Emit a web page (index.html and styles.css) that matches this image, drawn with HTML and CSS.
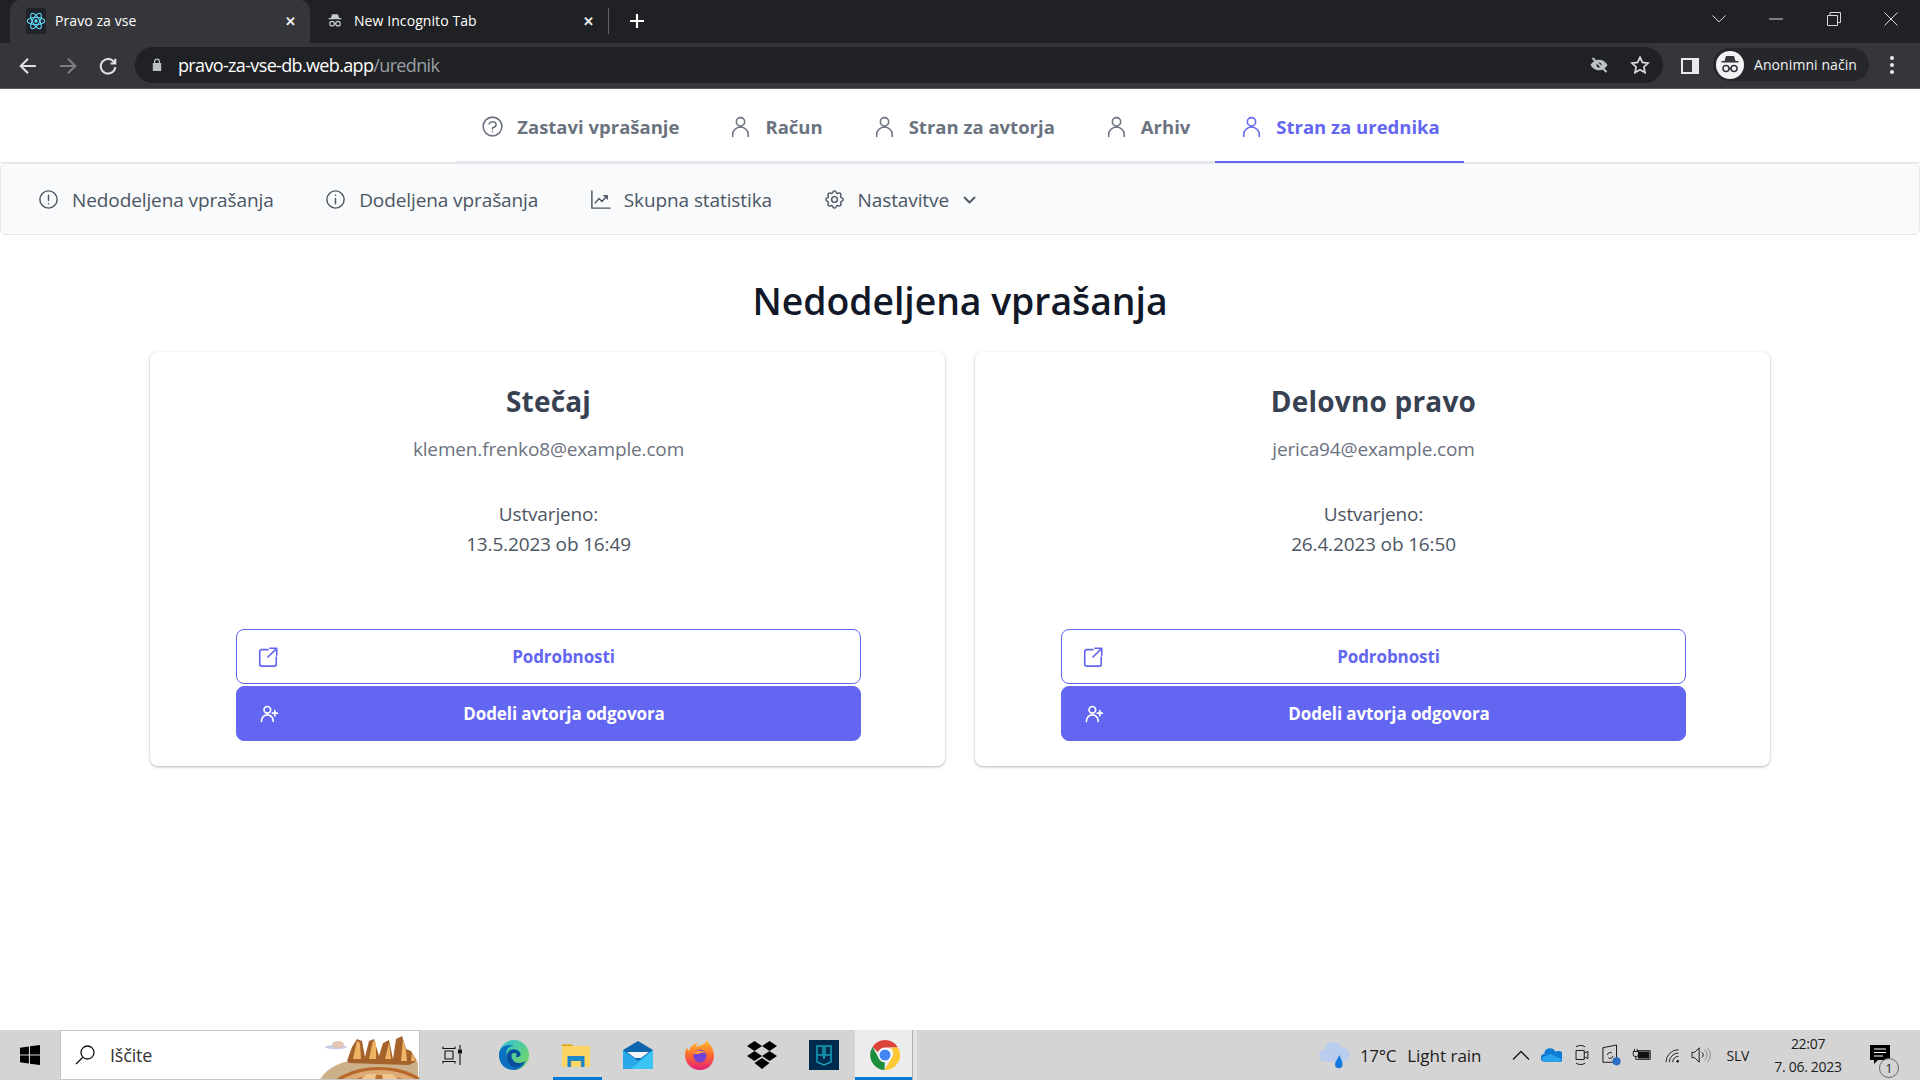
FILE: index.html
```html
<!DOCTYPE html>
<html lang="sl">
<head>
<meta charset="utf-8">
<title>Pravo za vse</title>
<link rel="stylesheet" href="styles.css">
</head>
<body>
<svg class="defs" width="0" height="0" aria-hidden="true">
  <symbol id="i-user" viewBox="0 0 24 24"><path d="M16 7.500a4 4 0 11-8 0 4 4 0 018 0zM4.500 21.500v-1.500a7.500 7.500 0 0115 0v1.500"/></symbol>
  <symbol id="i-question" viewBox="0 0 24 24"><path d="M8.700 9.500c.5-1.200 1.800-2 3.300-2 1.900 0 3.400 1.200 3.400 2.700 0 1.300-1.100 2.300-2.500 2.600-.5.100-.9.500-.9 1v.7m0 2.600h.01M21 12a9 9 0 11-18 0 9 9 0 0118 0z"/></symbol>
  <symbol id="i-excl" viewBox="0 0 24 24"><path d="M12 7.500v5.500m0 3.500h.01M21 12a9 9 0 11-18 0 9 9 0 0118 0z"/></symbol>
  <symbol id="i-info" viewBox="0 0 24 24"><path d="M12 11v5.500m0-9h.01M21 12a9 9 0 11-18 0 9 9 0 0118 0z"/></symbol>
  <symbol id="i-chart" viewBox="0 0 24 24"><path d="M3 3v18h19M6.500 15.500l4-4.500 3 3 5.500-6m-3.500 0h3.500v3.500"/></symbol>
  <symbol id="i-cog" viewBox="0 0 24 24"><path d="M10.325 4.317c.426-1.756 2.924-1.756 3.350 0a1.724 1.724 0 002.573 1.066c1.543-.94 3.310.826 2.370 2.370a1.724 1.724 0 001.065 2.572c1.756.426 1.756 2.924 0 3.350a1.724 1.724 0 00-1.066 2.573c.94 1.543-.826 3.310-2.370 2.370a1.724 1.724 0 00-2.572 1.065c-.426 1.756-2.924 1.756-3.350 0a1.724 1.724 0 00-2.573-1.066c-1.543.94-3.310-.826-2.370-2.370a1.724 1.724 0 00-1.065-2.572c-1.756-.426-1.756-2.924 0-3.350a1.724 1.724 0 001.066-2.573c-.94-1.543.826-3.310 2.370-2.370.996.608 2.296.07 2.572-1.065z"/><path d="M15 12a3 3 0 11-6 0 3 3 0 016 0z"/></symbol>
  <symbol id="i-ext" viewBox="0 0 24 24"><path d="M12 4H5a2 2 0 00-2 2v14a2 2 0 002 2h14a2 2 0 002-2v-8M14 2.500h7.500V10M21.500 2.500L12 12"/></symbol>
  <symbol id="i-uplus" viewBox="0 0 24 24"><path d="M14 7a4 4 0 11-8 0 4 4 0 018 0zM3 21v-1a7 7 0 0114 0v1M19 8v6m-3-3h6"/></symbol>
  <symbol id="i-spy" viewBox="0 0 24 24"><path class="solid" d="M8 3h8l1.500 5h3v1.500h-17V8h3z"/><circle class="ring" cx="8" cy="15.500" r="3"/><circle class="ring" cx="16" cy="15.500" r="3"/><path class="ring" d="M11 15.500h2"/></symbol>
</svg>

<header class="chrome">
  <div class="tabstrip">
    <div class="tab tab-active">
      <span class="fav-box">
        <svg class="fav" viewBox="0 0 24 24"><g fill="none" stroke="#61dafb" stroke-width="1.300"><ellipse cx="12" cy="12" rx="10.500" ry="4.200"/><ellipse cx="12" cy="12" rx="10.500" ry="4.200" transform="rotate(60 12 12)"/><ellipse cx="12" cy="12" rx="10.500" ry="4.200" transform="rotate(120 12 12)"/></g><circle cx="12" cy="12" r="2" fill="#61dafb"/></svg>
      </span>
      <span class="tab-title">Pravo za vse</span>
      <span class="tab-close">✕</span>
    </div>
    <div class="tab tab-idle">
      <svg class="spy-small"><use href="#i-spy"/></svg>
      <span class="tab-title">New Incognito Tab</span>
      <span class="tab-close">✕</span>
    </div>
    <span class="tab-sep"></span>
    <svg class="plus" viewBox="0 0 16 16"><path d="M8 1v14M1 8h14"/></svg>
    <div class="winctl">
      <svg class="wc wc-chev" viewBox="0 0 14 8"><path d="M.5.500L7 6.800 13.500.500"/></svg>
      <svg class="wc wc-min" viewBox="0 0 14 14"><path d="M0 7h14"/></svg>
      <svg class="wc wc-res" viewBox="0 0 14 14"><path d="M.5 3.500h10v10H.5zM3 3.500V.5h10.500v10h-3"/></svg>
      <svg class="wc wc-close" viewBox="0 0 14 14"><path d="M.5.500l13 13m0-13l-13 13"/></svg>
    </div>
  </div>
  <div class="toolbar">
    <svg class="tb-nav" viewBox="0 0 16 16"><path d="M15 8H2m6-6.500L1.500 8 8 14.500"/></svg>
    <svg class="tb-nav dim" viewBox="0 0 16 16"><path d="M1 8h13M8 1.500L14.500 8 8 14.500"/></svg>
    <svg class="tb-nav" viewBox="0 0 16 16"><path d="M13.800 5.200A6.500 6.500 0 1014.500 9M14.500 1.500v4.200h-4.200"/></svg>
    <div class="omnibox">
      <svg class="lock" viewBox="0 0 10 13"><path d="M2 5V3.500a3 3 0 016 0V5h1.200v8H.8V5zm1.200 0h3.600V3.500a1.800 1.800 0 00-3.600 0z"/></svg>
      <span class="url">pravo-za-vse-db.web.app<span class="url-path">/urednik</span></span>
      <svg class="omni-eye" viewBox="0 0 20 20"><path class="eye-fill" d="M1.500 10C3.500 6.500 6.500 4.800 10 4.800s6.500 1.700 8.500 5.200c-2 3.500-5 5.200-8.500 5.200S3.500 13.500 1.500 10z"/><circle class="eye-hole" cx="10" cy="10" r="2.500"/><path class="eye-slash" d="M3.500 3l14 14"/></svg>
      <svg class="omni-star" viewBox="0 0 20 20"><path d="M10 2.200l2.400 5.200 5.600.7-4.100 3.900 1.100 5.600-5-2.800-5 2.800 1.100-5.600L2 8.100l5.600-.7z"/></svg>
    </div>
    <svg class="sidepanel" viewBox="0 0 18 16"><path d="M0 0h18v16H0zM2 2v12h9V2z" fill-rule="evenodd"/></svg>
    <div class="profile">
      <span class="avatar"><svg class="spy-avatar"><use href="#i-spy"/></svg></span>
      <span class="profile-name">Anonimni način</span>
    </div>
    <span class="kebab"><i></i><i></i><i></i></span>
  </div>
</header>

<main class="page">
  <nav class="topnav">
    <a class="topnav-item"><svg class="ic ic-nav"><use href="#i-question"/></svg>Zastavi vprašanje</a>
    <a class="topnav-item"><svg class="ic ic-nav"><use href="#i-user"/></svg>Račun</a>
    <a class="topnav-item"><svg class="ic ic-nav"><use href="#i-user"/></svg>Stran za avtorja</a>
    <a class="topnav-item"><svg class="ic ic-nav"><use href="#i-user"/></svg>Arhiv</a>
    <a class="topnav-item is-current"><svg class="ic ic-nav"><use href="#i-user"/></svg>Stran za urednika</a>
  </nav>
  <nav class="subnav">
    <a class="subnav-item"><svg class="ic ic-sub"><use href="#i-excl"/></svg>Nedodeljena vprašanja</a>
    <a class="subnav-item"><svg class="ic ic-sub"><use href="#i-info"/></svg>Dodeljena vprašanja</a>
    <a class="subnav-item"><svg class="ic ic-sub"><use href="#i-chart"/></svg>Skupna statistika</a>
    <a class="subnav-item"><svg class="ic ic-sub"><use href="#i-cog"/></svg>Nastavitve<svg class="ic ic-chev" viewBox="0 0 12 8"><path d="M1 1.500l5 5 5-5"/></svg></a>
  </nav>
  <h1 class="title">Nedodeljena vprašanja</h1>
  <section class="cards">
    <article class="card">
      <h2 class="card-title">Stečaj</h2>
      <p class="card-email">klemen.frenko8@example.com</p>
      <p class="card-date">Ustvarjeno:<br>13.5.2023 ob 16:49</p>
      <div class="card-actions">
        <button class="btn btn-outline"><svg class="ic ic-btn"><use href="#i-ext"/></svg><span class="btn-label">Podrobnosti</span></button>
        <button class="btn btn-solid"><svg class="ic ic-btn"><use href="#i-uplus"/></svg><span class="btn-label">Dodeli avtorja odgovora</span></button>
      </div>
    </article>
    <article class="card">
      <h2 class="card-title">Delovno pravo</h2>
      <p class="card-email">jerica94@example.com</p>
      <p class="card-date">Ustvarjeno:<br>26.4.2023 ob 16:50</p>
      <div class="card-actions">
        <button class="btn btn-outline"><svg class="ic ic-btn"><use href="#i-ext"/></svg><span class="btn-label">Podrobnosti</span></button>
        <button class="btn btn-solid"><svg class="ic ic-btn"><use href="#i-uplus"/></svg><span class="btn-label">Dodeli avtorja odgovora</span></button>
      </div>
    </article>
  </section>
</main>

<footer class="taskbar">
  <div class="start"><svg class="win" viewBox="0 0 20 20"><path d="M0 2.800l8.900-1.300v8H0zM10 1.300L20 0v9.500H10zM0 10.500h8.900v8L0 17.200zM10 10.500h10V20l-10-1.300z"/></svg></div>
  <div class="search">
    <svg class="search-ic" viewBox="0 0 20 20"><circle cx="12.500" cy="7.500" r="6.500"/><path d="M7.800 12.200L1 19"/></svg>
    <span class="search-text">Iščite</span>
    <svg class="search-art" viewBox="0 0 100 50">
      <ellipse cx="17" cy="16" rx="11" ry="2" fill="#c3cfe4"/><ellipse cx="19" cy="13.500" rx="6" ry="3.500" fill="#e3c6b2"/>
      <path d="M0 50C8 36 22 30 40 29L99 31V50z" fill="#cbb08a"/>
      <path d="M28 30L33 16 38 8l5 2 3 16 4-16 5-2 5 17 4-13 6-3 4 19 3-20 6-3 4 13 5 2 6 10-8 4-60-2z" fill="#a5632b"/>
      <path d="M34 28l4-18 3 2 1 16zM50 28l4-18 3 2v16zM66 28l4-16 2 16zM82 30l2-22 3 12 1 10zM92 30l1-8 4 8z" fill="#eeb565"/>
      <ellipse cx="60" cy="63" rx="51" ry="27" fill="#b9682c"/>
      <ellipse cx="60" cy="64" rx="47" ry="25" fill="#dcaa72"/>
      <ellipse cx="60" cy="66" rx="40" ry="22" fill="#b9702f"/>
      <path d="M40 50l8-7h9l-1 7zM64 50l-1-7h10l9 7z" fill="#f2c48e"/>
    </svg>
  </div>
  <div class="tb-app tb-view"><svg class="taskview" viewBox="0 0 20 20"><path d="M1 1.500v2h12v-2M3 6h8v8H3zM1 18.500v-2h12v2M18 0v4M18 9v11"/><rect class="tv-dot" x="16.500" y="5" width="3" height="3"/></svg></div>
  <div class="tb-app"><svg class="app" viewBox="0 0 30 30"><defs><linearGradient id="ed1" x1="0" y1="0" x2="1" y2="1"><stop offset="0" stop-color="#2bc3d8"/><stop offset="1" stop-color="#7ed957"/></linearGradient></defs><circle cx="15" cy="15" r="15" fill="url(#ed1)"/><path d="M0 15C0 6 9 3 15 6c-6 0-9 4-7 10 2 8 12 12 19 5-3 6-8 9-12 9C6 30 0 24 0 15z" fill="#0c6fc0"/><path d="M8 16c0-5 5-8 10-6 4 2 5 6 1 7-5 1 2-4-4-4-4 0-3 6 1 9 3 2 7 1 10-1-3 5-8 7-12 6-4-2-6-6-6-11z" fill="#0a4f9e"/></svg></div>
  <div class="tb-app is-open"><svg class="app" viewBox="0 0 30 24"><path d="M1 1.500h10l2 3h-12z" fill="#e0a400"/><path d="M1 3h28v21H1z" fill="#fbd566"/><path d="M6.500 24V13h17v11h-3.500v-6h-10v6z" fill="#1f86c9"/></svg></div>
  <div class="tb-app"><svg class="app" viewBox="0 0 30 28"><path d="M0 9L15 0l15 9v19H0z" fill="#0f65ad"/><path d="M4 11h22l-8 6h-6z" fill="#f3f5f7"/><path d="M0 9l15 11L30 9v19H0z" fill="#29a8ea"/><path d="M30 9v19H8z" fill="#3cc4f4"/></svg></div>
  <div class="tb-app"><svg class="app" viewBox="0 0 30 30"><defs><linearGradient id="ff1" x1="0" y1="0" x2="0" y2="1"><stop offset="0" stop-color="#ffc22e"/><stop offset=".5" stop-color="#ff6a2c"/><stop offset="1" stop-color="#e5207a"/></linearGradient></defs><path d="M22 0c1 3 5 6 6 10 3 8-1 20-13 20C6 30 0 23 0 15c0-3 1-6 2-8 0 2 1 3 2 4 1-4 5-8 9-8-2 2-2 3-1 4 3-2 8-2 10-7z" fill="url(#ff1)"/><circle cx="15" cy="16" r="6.500" fill="#7542d6"/><path d="M8 13c3-3 10-4 13 1-3-2-6-1-7 0-2 0-4 0-6-1z" fill="#ff9a30"/></svg></div>
  <div class="tb-app"><svg class="app" viewBox="0 0 30 28"><path d="M7.500 0L15 5l-7.500 5L0 5zM22.500 0L30 5l-7.500 5L15 5zM7.500 10L15 15l-7.500 5L0 15zM22.500 10L30 15l-7.500 5L15 15zM15 17l7.500 5L15 28l-7.500-6z" fill="#000"/></svg></div>
  <div class="tb-app"><svg class="app app-tile" viewBox="0 0 30 30"><rect width="30" height="30" fill="#002a4e"/><path d="M8 6h6v9H8zM16 6h6v9h-6zM8 15v7l7 3 7-3v-7M14 15l1 3 1-3" fill="none" stroke="#18a0b8" stroke-width="1.500"/></svg></div>
  <div class="tb-app is-active"><svg class="app" viewBox="0 0 30 30"><path d="M15 0a15 15 0 0113 7.500H15a7.500 7.500 0 00-7 4.700L2.500 7A15 15 0 0115 0z" fill="#db4437"/><path d="M28 7.500A15 15 0 0114.500 30l6.500-11a7.500 7.500 0 00-.6-11.500z" fill="#fcc934"/><path d="M2.500 7l6.600 11.500A7.500 7.500 0 0014.800 22.500L14.500 30A15 15 0 012.500 7z" fill="#1e8e3e"/><circle cx="15" cy="15" r="7" fill="#fff"/><circle cx="15" cy="15" r="5.500" fill="#4285f4"/></svg></div>
  <span class="tb-sliver"></span>
  <div class="tray">
    <svg class="t-weather" viewBox="0 0 30 30"><path d="M6 21a5.500 5.500 0 01.5-11A8 8 0 0122 8a6.500 6.500 0 012 13z" fill="#b9cdee"/><path d="M20 15c1.500 4 3 6 3 9a3.500 3.500 0 01-7 0c0-3 2.500-5 4-9z" fill="#1479dc"/></svg>
    <span class="t-temp">17°C</span>
    <span class="t-cond">Light rain</span>
    <svg class="t-ic t-up" viewBox="0 0 18 10"><path d="M1 9.500l8-8 8 8"/></svg>
    <svg class="t-ic t-cloud" viewBox="0 0 22 14"><path d="M4 14a4 4 0 01-.5-8A6 6 0 0115 3.500a5 5 0 016 10.500z" fill="#0f7bd4"/><path d="M4 14a3 3 0 01-2-5l8-3 11 5a3 3 0 01-3 3z" fill="#2aa3ee"/></svg>
    <svg class="t-ic t-meet" viewBox="0 0 16 22"><path d="M2 2c3-2 7-2 10 0M2 20c3 2 7 2 10 0M2 6h9v10H2zM11 9l4-2v8l-4-2"/></svg>
    <svg class="t-ic t-sync" viewBox="0 0 22 24"><path d="M1 4l15-3v19H1zM6 12a3 3 0 015-2m1 3a3 3 0 01-5 2"/><circle class="t-dot" cx="16" cy="19" r="4.500"/></svg>
    <svg class="t-ic t-batt" viewBox="0 0 24 16"><path d="M4 1v3M7 1v3M2.500 4h6v3a3 3 0 01-6 0zM5.500 10v3H7M7 3h15v10H7"/><rect class="t-fill" x="8" y="4" width="13" height="8"/></svg>
    <svg class="t-ic t-wifi" viewBox="0 0 20 18"><path d="M1 17A15 15 0 0116 2M5 17A11 11 0 0116 6M9 17a7 7 0 017-7"/><circle class="t-fillc" cx="15" cy="16" r="1.500"/></svg>
    <svg class="t-ic t-vol" viewBox="0 0 22 20"><path d="M1 7h3l5-5v16l-5-5H1zM12 7a4 4 0 010 6"/><path class="t-faint" d="M15 4a8 8 0 010 12M18 2a11 11 0 010 16"/></svg>
    <span class="t-lang">SLV</span>
    <div class="t-clock"><span>22:07</span><span>7. 06. 2023</span></div>
    <div class="t-notif">
      <svg class="t-msg" viewBox="0 0 20 20"><path d="M0 0h20v15H8l-4 4v-4H0z"/><path class="t-msg-l" d="M4 4h12M4 7.500h12M4 11h9"/></svg>
      <span class="t-badge">1</span>
    </div>
  </div>
</footer>
</body>
</html>
```
FILE: styles.css
```css
* { box-sizing: border-box; }
html, body { margin: 0; height: 100%; }
body {
  width: 1920px;
  height: 1080px;
  overflow: hidden;
  display: flex;
  flex-direction: column;
  font-family: "Open Sans", "Noto Sans", sans-serif;
  background: #fff;
}
.defs { position: absolute; }
a { text-decoration: none; }

/* browser chrome */
.chrome { flex: none; background: #202124; color: #e8eaed; }
.tabstrip { height: 43px; display: flex; align-items: center; padding-left: 10px; }
.tab { height: 43px; display: flex; align-items: center; padding-bottom: 2px; font-size: 14px; letter-spacing: .08px; color: #e8eaed; }
.tab-active { width: 300px; background: #35363a; border-radius: 10px 10px 0 0; padding-left: 16px; padding-right: 14px; }
.tab-idle { width: 299px; padding-left: 16px; padding-right: 15px; }
.tab-title { flex: 1; white-space: nowrap; color: #fff; }
.tab-close { font-size: 13px; color: #eee; font-weight: 700; }
.fav-box { width: 20px; height: 26px; background: #20232a; border-radius: 2px; margin-right: 9px; display: flex; align-items: center; }
.fav { width: 20px; height: 20px; }
.spy-small { width: 18px; height: 18px; margin-right: 10px; fill: none; --spy: #c4c7cc; }
.tab-sep { width: 1px; height: 26px; background: #5f6368; margin-left: -1px; margin-bottom: 2px; }
.plus { width: 16px; height: 16px; margin-left: 20px; margin-bottom: 2px; fill: none; stroke: #fff; stroke-width: 2.200; }
.winctl { margin-left: auto; width: 186px; height: 100%; display: flex; align-items: center; justify-content: space-between; padding-bottom: 5px; margin-right: 22px; }
.wc { width: 14px; height: 14px; fill: none; stroke: #d8d8d8; stroke-width: 1; }
.wc-chev { height: 8px; }
.solid { fill: var(--spy); stroke: none; }
.ring { fill: none; stroke: var(--spy); stroke-width: 1.600; }
.toolbar { height: 46px; background: #35363a; display: flex; align-items: center; padding: 0 20px 0 19px; border-bottom: 1px solid #5a5b5e; }
.tb-nav { width: 18px; height: 18px; margin-right: 22px; fill: none; stroke: #dfe1e5; stroke-width: 1.800; flex: none; }
.tb-nav:nth-of-type(3) { margin-right: 18px; }
.tb-nav.dim { stroke: #7d7f83; }
.omnibox { width: 1528px; height: 36px; margin-top: -2px; background: #202124; border-radius: 18px; display: flex; align-items: center; padding: 0 10px 0 17px; flex: none; }
.lock { width: 10px; height: 13px; fill: #bdc1c6; margin-right: 16px; }
.url { flex: 1; font-size: 18px; letter-spacing: -.65px; color: #fff; }
.url-path { color: #9aa0a6; }
.omni-eye { width: 20px; height: 20px; margin-right: 21px; }
.eye-fill { fill: #bdc1c6; }
.eye-hole { fill: #202124; }
.eye-slash { stroke: #bdc1c6; stroke-width: 2; }
.omni-star { width: 20px; height: 20px; margin-right: 3px; fill: none; stroke: #dadce0; stroke-width: 1.700; }
.sidepanel { width: 18px; height: 16px; margin-left: 18px; fill: #e8eaed; flex: none; }
.profile { width: 156px; height: 33px; margin-left: 14px; background: #26272a; border-radius: 17px; display: flex; align-items: center; padding-left: 3px; flex: none; margin-top: -2px; }
.avatar { width: 28px; height: 28px; border-radius: 50%; background: #f1f3f4; margin-right: 10px; display: flex; align-items: center; justify-content: center; }
.spy-avatar { width: 24px; height: 24px; --spy: #35363a; }
.profile-name { font-size: 14px; letter-spacing: .08px; color: #f1f3f4; white-space: nowrap; }
.kebab { margin-left: 21px; display: flex; flex-direction: column; gap: 3px; margin-top: -2px; }
.kebab i { width: 4px; height: 4px; border-radius: 50%; background: #e8eaed; display: block; }

/* page */
.page { flex: 1; min-height: 0; color: #111827; }
.ic { fill: none; stroke: currentColor; stroke-width: 1.500; stroke-linecap: round; stroke-linejoin: round; flex: none; }
.topnav { height: 74px; display: flex; justify-content: center; background: linear-gradient(#e5e7eb, #e5e7eb) bottom left / 100% 1px no-repeat; }
.topnav-item { display: flex; align-items: center; gap: 12px; padding: 3px 24.500px 0; color: #6b7280; font-size: 18.500px; font-weight: 700; letter-spacing: 0; border-bottom: 2px solid #e5e7eb; white-space: nowrap; }
.topnav-item.is-current { color: #6366f1; border-bottom-color: #6366f1; }
.ic-nav { width: 25px; height: 25px; }
.subnav { height: 72px; background: #f9fafb; border: 1px solid #e5e7eb; border-radius: 6px; display: flex; align-items: center; gap: 50.500px; padding: 1px 0 0 36px; }
.subnav-item { display: flex; align-items: center; gap: 12px; color: #4b5563; font-size: 19px; letter-spacing: -.1px; white-space: nowrap; }
.ic-sub { width: 23px; height: 23px; }
.ic-chev { width: 13px; height: 8px; margin-left: 2px; stroke-width: 1.800; }
.title { margin: 40px 0 0; text-align: center; font-size: 37.400px; font-weight: 600; line-height: 52px; letter-spacing: -.05px; color: #111827; }
.cards { width: 1620px; margin: 25px auto 0; display: grid; grid-template-columns: 1fr 1fr; gap: 30px; }
.card { height: 414px; background: #fff; border-radius: 8px; box-shadow: 0 1px 3px rgba(0,0,0,.28), 0 0 2px rgba(0,0,0,.04); padding: 28px 84px 0 86px; display: flex; flex-direction: column; align-items: center; }
.card-title { margin: 0; font-size: 28px; line-height: 42px; font-weight: 700; letter-spacing: .2px; color: #374151; }
.card-email { margin: 12px 0 0; font-size: 19px; line-height: 30px; letter-spacing: -.15px; color: #6b7280; }
.card-date { margin: 35px 0 0; font-size: 19px; line-height: 30px; letter-spacing: -.15px; color: #4b5563; text-align: center; }
.card-actions { margin-top: auto; margin-bottom: 25px; width: 100%; display: flex; flex-direction: column; gap: 2px; }
.btn { height: 55px; width: 100%; display: flex; align-items: center; padding: 0 12px 0 20px; border-radius: 8px; font-family: inherit; font-size: 17px; font-weight: 700; letter-spacing: -.1px; border: 1px solid #6366f1; }
.btn-outline { background: #fff; color: #6366f1; }
.btn-solid { background: #6366f1; color: #fff; }
.btn-label { flex: 1; text-align: center; }
.ic-btn { width: 22px; height: 22px; stroke-width: 1.800; }
.btn-solid .ic-btn { width: 20px; height: 20px; margin: 0 1px 0 2px; stroke-width: 2; }

/* taskbar */
.taskbar { flex: none; height: 50px; background: #d4d4d4; display: flex; align-items: stretch; }
.start { width: 60px; display: flex; align-items: center; justify-content: center; }
.win { width: 20px; height: 20px; fill: #000; }
.search { width: 360px; background: #fff; border: 1px solid #c8c8c8; display: flex; align-items: center; padding-left: 14px; position: relative; overflow: hidden; }
.search-ic { width: 20px; height: 20px; fill: none; stroke: #111; stroke-width: 1.300; margin-right: 15px; }
.search-text { font-size: 18px; letter-spacing: -.2px; color: #333; }
.search-art { position: absolute; right: 0; top: 0; width: 100px; height: 50px; }
.tb-app { width: 62px; display: flex; align-items: center; justify-content: center; position: relative; }
.tb-view { width: 63px; }
.tb-app.is-open::after, .tb-app.is-active::after { content: ""; position: absolute; bottom: 0; height: 3px; background: #0078d4; }
.tb-app.is-open::after { left: 8px; right: 5px; }
.tb-app.is-active::after { left: 0; right: 0; }
.tb-app.is-active { width: 57px; padding-left: 3px; background: #ececec; }
.taskview { width: 20px; height: 20px; fill: none; stroke: #111; stroke-width: 1.100; }
.tv-dot { fill: #111; }
.app { width: 30px; height: 30px; }
.tb-sliver { width: 5px; background: #e2e2e2; border-left: 1px solid #b0b0b0; }
.tray { margin-left: auto; display: flex; align-items: center; color: #1c1c1c; position: relative; padding-right: 14px; }
.t-weather { width: 32px; height: 32px; margin-right: 10px; }
.t-temp { font-size: 17px; letter-spacing: -.3px; margin-right: 11px; }
.t-cond { font-size: 17px; margin-right: 30px; white-space: nowrap; }
.t-ic { fill: none; stroke: #1a1a1a; stroke-width: 1.100; flex: none; }
.t-up { width: 18px; height: 10px; margin-right: 11px; stroke-width: 1.400; }
.t-cloud { width: 21px; height: 14px; margin-right: 12px; }
.t-cloud path { stroke: none; }
.t-meet { width: 15px; height: 20px; margin-right: 13px; }
.t-sync { width: 20px; height: 22px; margin-right: 9px; }
.t-dot { fill: #2a6fc2; stroke: none; }
.t-batt { width: 21px; height: 14px; margin-right: 13px; }
.t-fill { fill: #111; stroke: none; }
.t-wifi { width: 17px; height: 15px; margin-right: 9px; }
.t-fillc { fill: #111; stroke: none; }
.t-vol { width: 20px; height: 18px; margin-right: 16px; }
.t-faint { stroke: #888; }
.t-lang { font-size: 14px; letter-spacing: -.3px; margin-right: 23px; }
.t-clock { width: 72px; margin-right: 26px; display: flex; flex-direction: column; align-items: center; font-size: 14px; line-height: 23px; letter-spacing: -.3px; white-space: nowrap; }
.t-notif { width: 36px; position: relative; display: flex; align-items: center; }
.t-msg { width: 20px; height: 20px; fill: #000; }
.t-msg-l { stroke: #fff; stroke-width: 1; fill: none; }
.t-badge { position: absolute; left: 9px; top: 13px; width: 20px; height: 20px; border-radius: 50%; border: 1px solid #666; background: #d4d4d4; font-size: 13px; line-height: 18px; text-align: center; }
```
